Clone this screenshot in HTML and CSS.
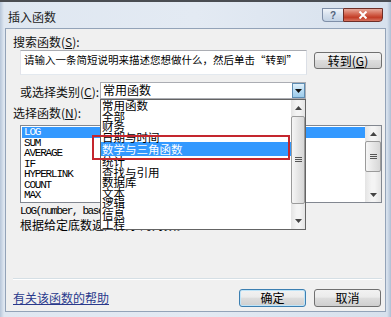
FILE: index.html
```html
<!DOCTYPE html>
<html lang="zh-CN">
  <head>
    <meta charset="UTF-8" />
    <meta name="viewport" content="width=device-width, initial-scale=1.0" />
    <title>插入函数</title>

    <link rel="stylesheet" href="styles.css">
  </head>
  <body>
    <div class="window">
      <div class="topstrip"></div>

      <div class="titlebar">
        <span class="title">插入函数</span>
        <div class="caption-buttons">
          <span class="cap-help">?</span>
          <span class="cap-close">
            <svg width="10" height="8" viewBox="0 0 10 8">
              <path d="M1.5 0.5 L8.5 7.5 M8.5 0.5 L1.5 7.5" stroke="#fff" stroke-width="2" />
            </svg>
          </span>
        </div>
      </div>

      <div class="client">
        <div class="label">搜索函数(<u>S</u>):</div>

        <div class="search-row">
          <div class="search-input">请输入一条简短说明来描述您想做什么，然后单击“转到”</div>
          <button class="btn btn-go">转到(<u>G</u>)</button>
        </div>

        <div class="category-row">
          <span class="category-label">或选择类别(<u>C</u>):</span>
          <div class="combo">
            <span class="combo-value">常用函数</span>
            <span class="combo-arrow">
              <svg width="7" height="4" viewBox="0 0 7 4"><polygon points="0,0 7,0 3.5,4" fill="#111" /></svg>
            </span>

            <div class="dropdown">
              <ul class="dropdown-items">
                <li>常用函数</li>
                <li>全部</li>
                <li>财务</li>
                <li>日期与时间</li>
                <li class="selected">数学与三角函数</li>
                <li>统计</li>
                <li>查找与引用</li>
                <li>数据库</li>
                <li>文本</li>
                <li>逻辑</li>
                <li>信息</li>
                <li>工程</li>
              </ul>
              <div class="scrollbar scrollbar-dropdown">
                <span class="sb-arrow">
                  <svg width="7" height="4" viewBox="0 0 7 4"><polygon points="0,4 7,4 3.5,0" fill="#444" /></svg>
                </span>
                <div class="sb-track">
                  <span class="sb-thumb">
                    <svg width="7" height="6" viewBox="0 0 7 6"><path d="M0 0.5H7M0 2.5H7M0 4.5H7" stroke="#555" /></svg>
                  </span>
                </div>
                <span class="sb-arrow">
                  <svg width="7" height="4" viewBox="0 0 7 4"><polygon points="0,0 7,0 3.5,4" fill="#444" /></svg>
                </span>
              </div>
            </div>

            <div class="callout"></div>
          </div>
        </div>

        <div class="label label-functions">选择函数(<u>N</u>):</div>

        <div class="function-list">
          <ul class="function-items">
            <li class="selected">LOG</li>
            <li>SUM</li>
            <li>AVERAGE</li>
            <li>IF</li>
            <li>HYPERLINK</li>
            <li>COUNT</li>
            <li>MAX</li>
          </ul>
          <div class="scrollbar scrollbar-functions">
            <span class="sb-arrow">
              <svg width="7" height="4" viewBox="0 0 7 4"><polygon points="0,4 7,4 3.5,0" fill="#444" /></svg>
            </span>
            <div class="sb-track">
              <span class="sb-thumb">
                <svg width="7" height="6" viewBox="0 0 7 6"><path d="M0 0.5H7M0 2.5H7M0 4.5H7" stroke="#555" /></svg>
              </span>
            </div>
            <span class="sb-arrow">
              <svg width="7" height="4" viewBox="0 0 7 4"><polygon points="0,0 7,0 3.5,4" fill="#444" /></svg>
            </span>
          </div>
        </div>

        <div class="syntax">LOG(number, base)</div>
        <div class="description">根据给定底数返回数字的对数。</div>

        <hr class="separator" />

        <div class="bottom-row">
          <a class="help-link" href="#">有关该函数的帮助</a>
          <button class="btn btn-default">确定</button>
          <button class="btn">取消</button>
        </div>
      </div>
    </div>
  </body>
</html>
```

FILE: styles.css
```css
*,
*::before,
*::after {
  box-sizing: border-box;
  margin: 0;
  padding: 0;
}
body {
  width: 391px;
  height: 317px;
  overflow: hidden;
  font-family: "Noto Sans CJK SC", "Liberation Sans", sans-serif;
  font-size: 12px;
  color: #000;
  background: #c9d7e8;
}
ul {
  list-style: none;
}

.window {
  width: 391px;
  height: 317px;
  display: flex;
  flex-direction: column;
  padding: 0 5px 5px 5px;
  background: linear-gradient(90deg, #b7c6d9 0, #dfe7f1 4px, #e3eaf3 50%, #d7e1ed calc(100% - 4px), #aebfd4 100%);
}
.topstrip {
  height: 2px;
  margin: 0 -5px;
  background: #4a4d52;
}

.titlebar {
  height: 26px;
  display: flex;
  align-items: flex-start;
}
.title {
  margin: 8px 0 0 3px;
  line-height: 14px;
  color: #1e1e1e;
}
.caption-buttons {
  margin: 6px 3px 0 auto;
  display: flex;
}
.cap-help {
  width: 21px;
  height: 14px;
  display: flex;
  align-items: center;
  justify-content: center;
  border: 1px solid #7f8fa8;
  border-right: 0;
  border-radius: 0 0 0 4px;
  background: linear-gradient(#f1f5fa, #d5e0ed 50%, #c3d2e4);
  font-family: "Liberation Sans", sans-serif;
  font-size: 10px;
  font-weight: 700;
  color: #53647c;
}
.cap-close {
  width: 40px;
  height: 14px;
  display: flex;
  align-items: center;
  justify-content: center;
  border: 1px solid #6e2e27;
  border-radius: 0 0 4px 0;
  background: linear-gradient(#e9a99a, #cf5a44 50%, #c23d27 70%, #d6735f);
}

.client {
  flex: 1;
  display: flex;
  flex-direction: column;
  padding: 6px 3px 4px 7px;
  background: #f0f0f0;
  border: 1px solid #93a3b8;
}
.label {
  line-height: 14px;
  color: #111;
}

.search-row {
  display: flex;
  align-items: flex-start;
  gap: 7px;
  margin: 1px 0 0 7px;
}
.search-input {
  width: 287px;
  height: 25px;
  padding: 2px 3px;
  border: 1px solid #abadb3;
  border-color: #abadb3 #dbdfe6 #e3e9ef #e2e3ea;
  background: #fff;
  font-size: 10.5px;
  line-height: 14px;
  white-space: nowrap;
  overflow: hidden;
}
.btn {
  width: 67px;
  height: 18px;
  border: 1px solid #707070;
  border-radius: 3px;
  background: linear-gradient(#f2f2f2 0, #ebebeb 45%, #dddddd 50%, #cfcfcf 100%);
  font-family: "Noto Sans CJK SC", sans-serif;
  font-size: 12px;
  line-height: 14px;
  color: #000;
}
.btn-go {
  width: 68px;
  height: 17px;
  margin-top: 2px;
}
.btn-default {
  border-color: #3c7fb1;
  box-shadow: inset 0 0 0 1px #bfe4f8;
}

.category-row {
  display: flex;
  align-items: flex-start;
  margin: 7px 0 0 7px;
}
.category-label {
  width: 80px;
  padding-top: 3px;
  line-height: 14px;
  color: #111;
}
.combo {
  position: relative;
  width: 206px;
  height: 17px;
  display: flex;
  border: 1px solid #abadb3;
  background: #fff;
}
.combo-value {
  flex: 1;
  padding-left: 2px;
  line-height: 14px;
}
.combo-arrow {
  width: 13px;
  height: 15px;
  display: flex;
  align-items: center;
  justify-content: center;
  border: 1px solid #5e8db3;
  background: linear-gradient(#e1f1fb, #b9dcf3 50%, #9ccbea);
}

.dropdown {
  position: absolute;
  top: 16px;
  left: -1px;
  width: 206px;
  height: 131px;
  display: flex;
  border: 1px solid #646464;
  background: #fff;
  z-index: 2;
}
.dropdown-items {
  flex: 1;
  font-size: 11.5px;
}
.dropdown-items li {
  height: 10.5px;
  line-height: 10.5px;
  padding-left: 1px;
  white-space: nowrap;
}
.dropdown-items li.selected {
  height: 14px;
  line-height: 14px;
  background: #3399ff;
  color: #fff;
}
.callout {
  position: absolute;
  top: 52px;
  left: -9px;
  width: 198px;
  height: 25px;
  border: 2px solid #c4262e;
  z-index: 3;
}

.scrollbar {
  display: flex;
  flex-direction: column;
  background: linear-gradient(90deg, #e4e4e4, #f4f4f4 40%, #f4f4f4 60%, #e4e4e4);
}
.sb-arrow {
  height: 16px;
  display: flex;
  align-items: center;
  justify-content: center;
}
.sb-track {
  flex: 1;
  display: flex;
  flex-direction: column;
}
.sb-thumb {
  display: flex;
  align-items: center;
  justify-content: center;
  border: 1px solid #9b9b9b;
  border-radius: 2px;
  background: linear-gradient(90deg, #f6f6f6, #e6e6e6 50%, #d7d7d7);
}
.scrollbar-dropdown {
  width: 14px;
}
.scrollbar-dropdown .sb-thumb {
  height: 88px;
}
.scrollbar-functions {
  width: 16px;
}
.scrollbar-functions .sb-arrow {
  height: 15px;
}
.scrollbar-functions .sb-thumb {
  height: 31px;
}

.label-functions {
  margin-top: 7px;
}
.function-list {
  width: 362px;
  height: 78px;
  display: flex;
  margin: 5px 0 0 7px;
  border: 1px solid #828790;
  background: #fff;
}
.function-items {
  flex: 1;
  padding: 1px 0 0 1px;
  font-family: "Liberation Mono", monospace;
  font-size: 11px;
  letter-spacing: -1.2px;
}
.function-items li {
  height: 10.5px;
  line-height: 10.5px;
  padding-left: 2px;
}
.function-items li.selected {
  background: #3399ff;
  color: #fff;
}

.syntax {
  margin: 2px 0 0 7px;
  line-height: 13px;
  font-family: "Liberation Mono", monospace;
  font-size: 11px;
  letter-spacing: -1.4px;
}
.description {
  margin-left: 7px;
  line-height: 14px;
}

.separator {
  margin-top: auto;
  height: 2px;
  border: 0;
  border-top: 1px solid #d5dfe5;
  border-bottom: 1px solid #fff;
}
.bottom-row {
  display: flex;
  align-items: center;
  gap: 8px;
  margin: 9px 1px 0 0;
}
.help-link {
  flex: 1;
  color: #2a3a8c;
  line-height: 14px;
  text-decoration: underline;
}
```
